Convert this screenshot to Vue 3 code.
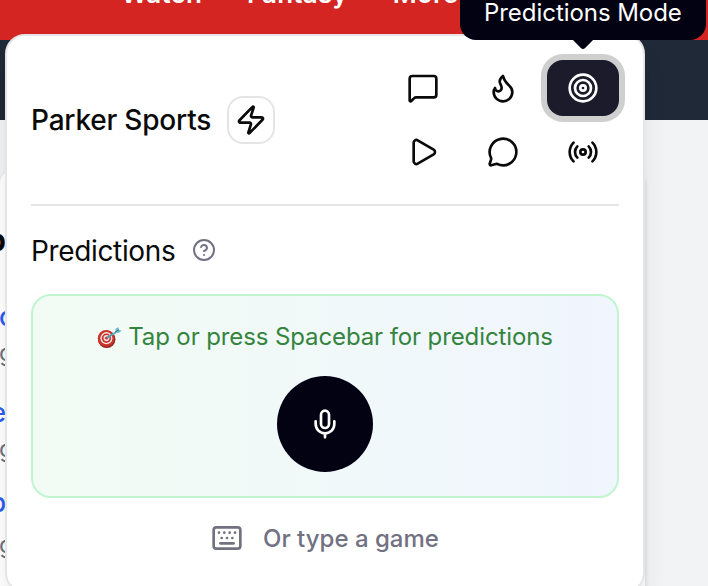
<script setup>
const navItems = ['Watch', 'Fantasy', 'More']
const modes = [
  { name: 'chat', paths: ['M22 17a2 2 0 0 1-2 2H6.828a2 2 0 0 0-1.414.586l-2.202 2.202A.71.71 0 0 1 2 21.286V5a2 2 0 0 1 2-2h16a2 2 0 0 1 2 2z'] },
  { name: 'flame', paths: ['M12 3q1 4 4 6.5t3 5.5a1 1 0 0 1-14 0 5 5 0 0 1 1-3 1 1 0 0 0 5 0c0-2-1.5-3-1.5-5q0-2 2.5-4'] },
  { name: 'target', active: true, circles: [10, 6, 2], paths: [] },
  { name: 'play', paths: ['M5 5a2 2 0 0 1 3.008-1.728l11.997 6.998a2 2 0 0 1 .003 3.458l-12 7A2 2 0 0 1 5 19z'] },
  { name: 'bubble', paths: ['M2.992 16.342a2 2 0 0 1 .094 1.167l-1.065 3.29a1 1 0 0 0 1.236 1.168l3.413-.998a2 2 0 0 1 1.099.092 10 10 0 1 0-4.777-4.719'] },
  { name: 'radio', circles: [2], paths: ['M16.247 7.761a6 6 0 0 1 0 8.478', 'M19.075 4.933a10 10 0 0 1 0 14.134', 'M4.925 19.067a10 10 0 0 1 0-14.134', 'M7.753 16.239a6 6 0 0 1 0-8.478'] }
]
</script>

<template>
  <div class="screen">
    <div class="page">
      <nav class="topbar"><span v-for="n in navItems" :key="n">{{ n }}</span></nav>
      <div class="subbar"></div>
      <div class="article">
        <b class="title">p</b>
        <span class="link l1">c</span>
        <span class="meta m1">g</span>
        <span class="link l2">e</span>
        <span class="meta m2">g</span>
        <span class="link l3">p</span>
        <span class="meta m3">g</span>
      </div>
    </div>

    <main class="panel">
      <header>
        <h1>Parker Sports</h1>
        <button class="zap">
          <svg class="icon" viewBox="0 0 24 24"><path d="M4 14a1 1 0 0 1-.78-1.63l9.9-10.2a.5.5 0 0 1 .86.46l-1.92 6.02A1 1 0 0 0 13 10h7a1 1 0 0 1 .78 1.63l-9.9 10.2a.5.5 0 0 1-.86-.46l1.92-6.02A1 1 0 0 0 11 14z" /></svg>
        </button>
        <div class="modes">
          <button v-for="m in modes" :key="m.name" :class="{ active: m.active }">
            <svg class="icon" viewBox="0 0 24 24">
              <path v-for="p in m.paths" :key="p" :d="p" />
              <circle v-for="r in m.circles" :key="r" cx="12" cy="12" :r="r" />
            </svg>
          </button>
        </div>
      </header>

      <div class="heading">
        <h2>Predictions</h2>
        <svg class="icon help" viewBox="0 0 24 24"><circle cx="12" cy="12" r="10" /><path d="M9.09 9a3 3 0 0 1 5.83 1c0 2-3 3-3 3M12 17h.01" /></svg>
      </div>

      <section class="voice">
        <p>
          <svg class="dart" viewBox="0 0 24 22">
            <ellipse cx="9.2" cy="12.2" rx="8.7" ry="8.8" fill="#8f211d" />
            <ellipse cx="8.6" cy="11.4" rx="8.4" ry="8.4" fill="#cb342d" />
            <ellipse cx="8.9" cy="11.2" rx="6" ry="6.1" fill="#f4e4e1" />
            <ellipse cx="8.9" cy="11.2" rx="4.6" ry="4.7" fill="#c7322b" />
            <ellipse cx="9" cy="11.1" rx="3" ry="3.1" fill="#f4e4e1" />
            <circle cx="9.1" cy="11" r="1.6" fill="#c7322b" />
            <path d="M9.5 10.7 18 5.4" stroke="#4d9eb0" stroke-width="1.8" />
            <path d="m14.6 6.8 3.2-2.1.5-3.3L21 .2l.3 2.7 2.7.5-2 2.2-3.2.5-3 2.2z" fill="#67b8c8" />
            <path d="m17.5 5.2 4-2.6" stroke="#307180" stroke-width=".9" />
          </svg>
          <span>Tap or press Spacebar for predictions</span>
        </p>
        <button class="mic">
          <svg class="icon" viewBox="0 0 24 24"><path d="M12 19v3M19 10v2a7 7 0 0 1-14 0v-2" /><rect x="9" y="2" width="6" height="13" rx="3" /></svg>
        </button>
      </section>

      <div class="type">
        <svg class="icon" viewBox="0 0 24 24"><rect x="2" y="4" width="20" height="16" rx="2" /><path d="M6 8h.01M10 8h.01M14 8h.01M18 8h.01M8 12h.01M12 12h.01M16 12h.01M7 16h10" /></svg>
        <span>Or type a game</span>
      </div>
    </main>

    <div class="tooltip"><span>Predictions Mode</span></div>
  </div>
</template>

<style>
body { margin: 0; overflow: hidden; }
</style>

<style scoped>
* { box-sizing: border-box; }
.screen { position: relative; width: 708px; height: 586px; overflow: hidden; background: #f2f3f5; font-family: Inter, sans-serif; color: #0a0a0a; }
button { display: flex; align-items: center; justify-content: center; padding: 0; border: 0; background: none; color: inherit; }
h1, h2, p { margin: 0; font-weight: 400; white-space: nowrap; }
.icon { display: block; width: 32px; height: 32px; fill: none; stroke: currentColor; stroke-width: 2; stroke-linecap: round; stroke-linejoin: round; flex: none; }
.topbar { display: flex; gap: 45px; height: 40px; padding-left: 121px; background: #d42522; color: #fff; font-size: 26px; font-weight: 600; line-height: 30px; letter-spacing: .2px; }
.topbar span { margin-top: -21px; }
.subbar { height: 80px; background: #1f2937; }
.article { position: relative; width: 645px; height: 440px; margin-top: 48px; border-radius: 16px; background: #fff; box-shadow: 0 2px 5px #0002; }
.article > * { position: absolute; right: 639px; line-height: 32px; }
.title { top: 56px; font-size: 30px; }
.link { color: #2b5df0; font-size: 26px; font-weight: 500; }
.meta { color: #6b7280; font-size: 24px; }
.article .l1, .article .meta { right: auto; left: -1px; }
.l1 { top: 133px; } .m1 { top: 169px; } .l2 { top: 229px; } .m2 { top: 265px; } .l3 { top: 319px; } .m3 { top: 361px; }
.panel { position: absolute; left: 5px; top: 34px; width: 640px; height: 559px; padding: 24px; border: 2px solid #e5e5e5; border-radius: 20px; background: #fff; box-shadow: 0 20px 30px -6px #0000001a, 0 8px 12px -8px #0000001a; }
header { display: flex; align-items: center; height: 146px; padding-bottom: 24px; border-bottom: 2px solid #e5e5e5; }
h1 { width: 180px; font-size: 28px; font-weight: 500; letter-spacing: -.2px; }
.zap { width: 48px; height: 48px; margin-left: 16px; border: 2px solid #e5e5e5; border-radius: 16px; }
.modes { display: grid; grid-template-columns: repeat(3, 72px); grid-auto-rows: 56px; gap: 8px; margin-left: auto; }
.modes button { border-radius: 16px; }
.modes .active { background: #1c1b2b; color: #fff; box-shadow: 0 0 0 6px #cfcfcf; }
.heading { display: flex; align-items: center; gap: 16px; height: 88px; }
h2 { width: 145px; padding-top: 1px; font-size: 28px; font-weight: 430; letter-spacing: -.35px; }
.help { width: 24px; height: 24px; color: #717182; }
.voice { display: flex; flex-direction: column; align-items: center; gap: 24px; height: 204px; padding-top: 24px; border: 2px solid #c1f5d0; border-radius: 20px; background: linear-gradient(to right, #f2fcf4, #f0f5fe); }
.voice p { display: flex; align-items: center; gap: 6px; height: 32px; color: #34843e; font-size: 24px; font-weight: 430; letter-spacing: -.11px; }
.dart { width: 25px; height: 22px; margin-top: 3px; fill: none; }
.mic { width: 96px; height: 96px; border-radius: 50%; background: #030213; color: #fff; }
.type { display: flex; align-items: center; gap: 20px; height: 80px; padding-left: 180px; color: #717182; font-size: 24px; font-weight: 550; white-space: nowrap; }
.tooltip { position: absolute; left: 460px; top: -24px; width: 246px; height: 64px; border-radius: 16px; background: #030213; color: #fff; font-size: 24px; font-weight: 430; letter-spacing: -.05px; line-height: 32px; padding: 21px 0 0 24px; white-space: nowrap; }
.tooltip::after { content: ''; position: absolute; left: 113px; bottom: -6px; width: 20px; height: 20px; border-radius: 3px; background: #030213; transform: rotate(45deg); }
.tooltip span { position: relative; }
</style>
